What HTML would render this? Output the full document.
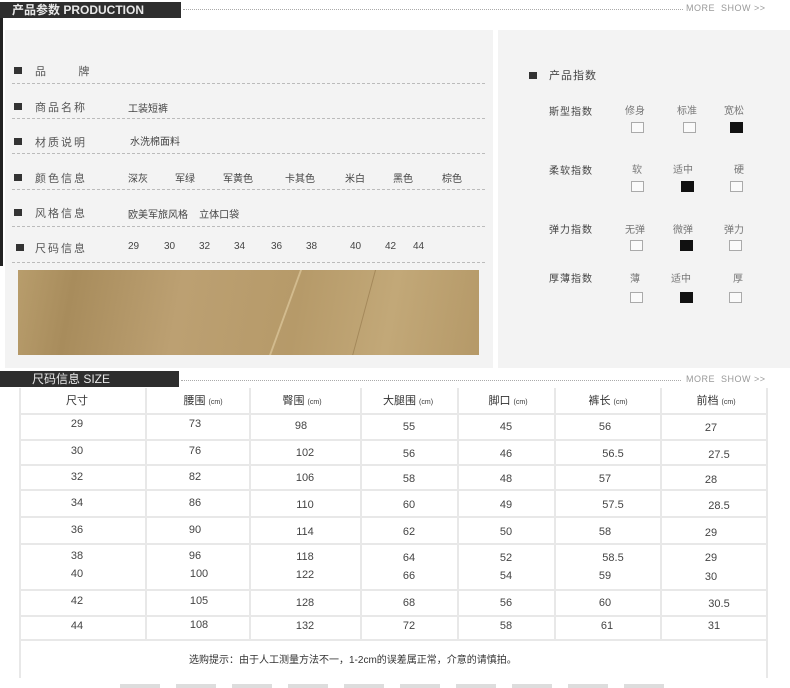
<!DOCTYPE html>
<html><head><meta charset="utf-8">
<style>
*{margin:0;padding:0;box-sizing:border-box}
body{width:790px;height:688px;background:#fff;position:relative;overflow:hidden;font-family:"Liberation Sans","Noto Sans CJK SC",sans-serif;color:#444}
.a{position:absolute;white-space:nowrap}
.bar{background:#2e2e2e;color:#e8e8e8;font-size:12px;font-weight:bold;line-height:16px}
.dots{border-top:1px dotted #aaa;height:0}
.more{font-size:9px;color:#999;letter-spacing:.5px}
.lab{font-size:11px;color:#555;letter-spacing:2px}
.val{font-size:10px;color:#444}
.sq{width:8px;height:7px;background:#333}
.dash{border-top:1px dashed #bbb;height:0}
.box{width:13px;height:11px;border:1px solid #aaa;background:#fafafa}
.fill{width:13px;height:11px;background:#111}
.hl{background:#e8e8e8;height:2px}
.vl{background:#e8e8e8;width:2px}
.t{font-size:11px;color:#444;transform:translateX(-50%)}
.th{font-size:11px;color:#333;transform:translateX(-50%)}
.th small{font-size:7px}
</style></head><body>
<div class="a bar" style="left:0;top:2px;width:181px;height:16px;padding-left:12px">产品参数 PRODUCTION</div>
<div class="a dots" style="left:183px;top:9px;width:500px"></div>
<div class="a more" style="left:686px;top:3px">MORE&nbsp; SHOW &gt;&gt;</div>
<div class="a" style="left:0;top:18px;width:3px;height:248px;background:#222"></div>
<div class="a" style="left:5px;top:30px;width:488px;height:338px;background:#f3f3f3"></div>
<div class="a" style="left:498px;top:30px;width:292px;height:338px;background:#f3f3f3"></div>

<div class="a sq" style="left:14px;top:67px"></div><div class="a lab" style="left:35px;top:63px">品&nbsp;&nbsp;&nbsp;&nbsp;&nbsp;&nbsp;牌</div>
<div class="a dash" style="left:12px;top:83px;width:473px"></div>
<div class="a sq" style="left:14px;top:103px"></div><div class="a lab" style="left:35px;top:99px">商品名称</div><div class="a val" style="left:128px;top:100px">工装短裤</div>
<div class="a dash" style="left:12px;top:118px;width:473px"></div>
<div class="a sq" style="left:14px;top:138px"></div><div class="a lab" style="left:35px;top:134px">材质说明</div><div class="a val" style="left:130px;top:133px">水洗棉面料</div>
<div class="a dash" style="left:12px;top:153px;width:473px"></div>
<div class="a sq" style="left:14px;top:174px"></div><div class="a lab" style="left:35px;top:170px">颜色信息</div>
<div class="a val" style="left:128px;top:170px">深灰</div><div class="a val" style="left:175px;top:170px">军绿</div><div class="a val" style="left:223px;top:170px">军黄色</div><div class="a val" style="left:285px;top:170px">卡其色</div><div class="a val" style="left:345px;top:170px">米白</div><div class="a val" style="left:393px;top:170px">黑色</div><div class="a val" style="left:442px;top:170px">棕色</div>
<div class="a dash" style="left:12px;top:189px;width:473px"></div>
<div class="a sq" style="left:14px;top:209px"></div><div class="a lab" style="left:35px;top:205px">风格信息</div><div class="a val" style="left:128px;top:206px">欧美军旅风格&nbsp;&nbsp;&nbsp;&nbsp;立体口袋</div>
<div class="a dash" style="left:12px;top:226px;width:473px"></div>
<div class="a sq" style="left:16px;top:244px"></div><div class="a lab" style="left:35px;top:240px">尺码信息</div>
<div class="a val" style="left:128px;top:241px">29</div><div class="a val" style="left:164px;top:241px">30</div><div class="a val" style="left:199px;top:241px">32</div><div class="a val" style="left:234px;top:241px">34</div><div class="a val" style="left:271px;top:241px">36</div><div class="a val" style="left:306px;top:241px">38</div><div class="a val" style="left:350px;top:241px">40</div><div class="a val" style="left:385px;top:241px">42</div><div class="a val" style="left:413px;top:241px">44</div>
<div class="a dash" style="left:12px;top:262px;width:473px"></div>
<div class="a" style="left:18px;top:270px;width:461px;height:85px;background:linear-gradient(100deg,#b89d6c 0%,#a88c5c 12%,#bca072 35%,#b69a69 60%,#c2a878 80%,#b59968 100%)"></div>
<div class="a" style="left:300px;top:270px;width:2px;height:85px;background:#d2bb8e;transform:skewX(-20deg);transform-origin:top"></div>
<div class="a" style="left:375px;top:270px;width:1px;height:85px;background:#a4885a;transform:skewX(-15deg);transform-origin:top"></div>

<div class="a sq" style="left:529px;top:72px"></div><div class="a lab" style="left:549px;top:67px;font-size:11px;color:#444;letter-spacing:1px">产品指数</div>
<div class="a val" style="left:549px;top:103px;letter-spacing:1px">斯型指数</div>
<div class="a val" style="left:625px;top:102px;color:#777">修身</div><div class="a val" style="left:677px;top:102px;color:#777">标准</div><div class="a val" style="left:724px;top:102px;color:#777">宽松</div>
<div class="a box" style="left:631px;top:122px"></div><div class="a box" style="left:683px;top:122px"></div><div class="a fill" style="left:730px;top:122px"></div>
<div class="a val" style="left:549px;top:162px;letter-spacing:1px">柔软指数</div>
<div class="a val" style="left:632px;top:161px;color:#777">软</div><div class="a val" style="left:673px;top:161px;color:#777">适中</div><div class="a val" style="left:734px;top:161px;color:#777">硬</div>
<div class="a box" style="left:631px;top:181px"></div><div class="a fill" style="left:681px;top:181px"></div><div class="a box" style="left:730px;top:181px"></div>
<div class="a val" style="left:549px;top:221px;letter-spacing:1px">弹力指数</div>
<div class="a val" style="left:625px;top:221px;color:#777">无弹</div><div class="a val" style="left:673px;top:221px;color:#777">微弹</div><div class="a val" style="left:724px;top:221px;color:#777">弹力</div>
<div class="a box" style="left:630px;top:240px"></div><div class="a fill" style="left:680px;top:240px"></div><div class="a box" style="left:729px;top:240px"></div>
<div class="a val" style="left:549px;top:270px;letter-spacing:1px">厚薄指数</div>
<div class="a val" style="left:630px;top:270px;color:#777">薄</div><div class="a val" style="left:671px;top:270px;color:#777">适中</div><div class="a val" style="left:733px;top:270px;color:#777">厚</div>
<div class="a box" style="left:630px;top:292px"></div><div class="a fill" style="left:680px;top:292px"></div><div class="a box" style="left:729px;top:292px"></div>

<div class="a bar" style="left:0;top:371px;width:179px;height:16px;padding-left:32px;font-weight:normal">尺码信息 SIZE</div>
<div class="a dots" style="left:181px;top:380px;width:500px"></div>
<div class="a more" style="left:686px;top:374px">MORE&nbsp; SHOW &gt;&gt;</div>

<div class="a vl" style="left:19px;top:388px;height:290px"></div>
<div class="a vl" style="left:766px;top:388px;height:290px"></div>
<div class="a vl" style="left:145px;top:388px;height:252px"></div>
<div class="a vl" style="left:249px;top:388px;height:252px"></div>
<div class="a vl" style="left:360px;top:388px;height:252px"></div>
<div class="a vl" style="left:457px;top:388px;height:252px"></div>
<div class="a vl" style="left:554px;top:388px;height:252px"></div>
<div class="a vl" style="left:660px;top:388px;height:252px"></div>
<div class="a hl" style="left:19px;top:413px;width:749px"></div>
<div class="a hl" style="left:19px;top:439px;width:749px"></div>
<div class="a hl" style="left:19px;top:464px;width:749px"></div>
<div class="a hl" style="left:19px;top:489px;width:749px"></div>
<div class="a hl" style="left:19px;top:516px;width:749px"></div>
<div class="a hl" style="left:19px;top:543px;width:749px"></div>
<div class="a hl" style="left:19px;top:589px;width:749px"></div>
<div class="a hl" style="left:19px;top:615px;width:749px"></div>
<div class="a hl" style="left:19px;top:639px;width:749px"></div>

<div class="a th" style="left:77px;top:392px">尺寸</div>
<div class="a th" style="left:203px;top:392px">腰围 <small>(cm)</small></div>
<div class="a th" style="left:302px;top:392px">臀围 <small>(cm)</small></div>
<div class="a th" style="left:408px;top:392px">大腿围 <small>(cm)</small></div>
<div class="a th" style="left:508px;top:392px">脚口 <small>(cm)</small></div>
<div class="a th" style="left:608px;top:392px">裤长 <small>(cm)</small></div>
<div class="a th" style="left:716px;top:392px">前档 <small>(cm)</small></div>

<div class="a t" style="left:77px;top:418px">29</div><div class="a t" style="left:195px;top:418px">73</div><div class="a t" style="left:301px;top:420px">98</div><div class="a t" style="left:409px;top:421px">55</div><div class="a t" style="left:506px;top:421px">45</div><div class="a t" style="left:605px;top:421px">56</div><div class="a t" style="left:711px;top:422px">27</div>
<div class="a t" style="left:77px;top:445px">30</div><div class="a t" style="left:195px;top:445px">76</div><div class="a t" style="left:305px;top:447px">102</div><div class="a t" style="left:409px;top:448px">56</div><div class="a t" style="left:506px;top:448px">46</div><div class="a t" style="left:613px;top:448px">56.5</div><div class="a t" style="left:719px;top:449px">27.5</div>
<div class="a t" style="left:77px;top:471px">32</div><div class="a t" style="left:195px;top:471px">82</div><div class="a t" style="left:305px;top:472px">106</div><div class="a t" style="left:409px;top:473px">58</div><div class="a t" style="left:506px;top:473px">48</div><div class="a t" style="left:605px;top:473px">57</div><div class="a t" style="left:711px;top:474px">28</div>
<div class="a t" style="left:77px;top:497px">34</div><div class="a t" style="left:195px;top:497px">86</div><div class="a t" style="left:305px;top:499px">110</div><div class="a t" style="left:409px;top:499px">60</div><div class="a t" style="left:506px;top:499px">49</div><div class="a t" style="left:613px;top:499px">57.5</div><div class="a t" style="left:719px;top:500px">28.5</div>
<div class="a t" style="left:77px;top:524px">36</div><div class="a t" style="left:195px;top:524px">90</div><div class="a t" style="left:305px;top:526px">114</div><div class="a t" style="left:409px;top:526px">62</div><div class="a t" style="left:506px;top:526px">50</div><div class="a t" style="left:605px;top:526px">58</div><div class="a t" style="left:711px;top:527px">29</div>
<div class="a t" style="left:77px;top:550px">38</div><div class="a t" style="left:195px;top:550px">96</div><div class="a t" style="left:305px;top:551px">118</div><div class="a t" style="left:409px;top:552px">64</div><div class="a t" style="left:506px;top:552px">52</div><div class="a t" style="left:613px;top:552px">58.5</div><div class="a t" style="left:711px;top:552px">29</div>
<div class="a t" style="left:77px;top:568px">40</div><div class="a t" style="left:199px;top:568px">100</div><div class="a t" style="left:305px;top:569px">122</div><div class="a t" style="left:409px;top:570px">66</div><div class="a t" style="left:506px;top:570px">54</div><div class="a t" style="left:605px;top:570px">59</div><div class="a t" style="left:711px;top:571px">30</div>
<div class="a t" style="left:77px;top:595px">42</div><div class="a t" style="left:199px;top:595px">105</div><div class="a t" style="left:305px;top:597px">128</div><div class="a t" style="left:409px;top:597px">68</div><div class="a t" style="left:506px;top:597px">56</div><div class="a t" style="left:605px;top:597px">60</div><div class="a t" style="left:719px;top:598px">30.5</div>
<div class="a t" style="left:77px;top:620px">44</div><div class="a t" style="left:199px;top:619px">108</div><div class="a t" style="left:305px;top:620px">132</div><div class="a t" style="left:409px;top:620px">72</div><div class="a t" style="left:506px;top:620px">58</div><div class="a t" style="left:607px;top:620px">61</div><div class="a t" style="left:714px;top:620px">31</div>

<div class="a" style="left:189px;top:651px;font-size:10px;color:#333">选购提示：由于人工测量方法不一，1-2cm的误差属正常，介意的请慎拍。</div>
<div class="a" style="left:120px;top:684px;width:550px;height:4px;background:repeating-linear-gradient(90deg,#ddd 0 40px,transparent 40px 56px)"></div>
</body></html>
